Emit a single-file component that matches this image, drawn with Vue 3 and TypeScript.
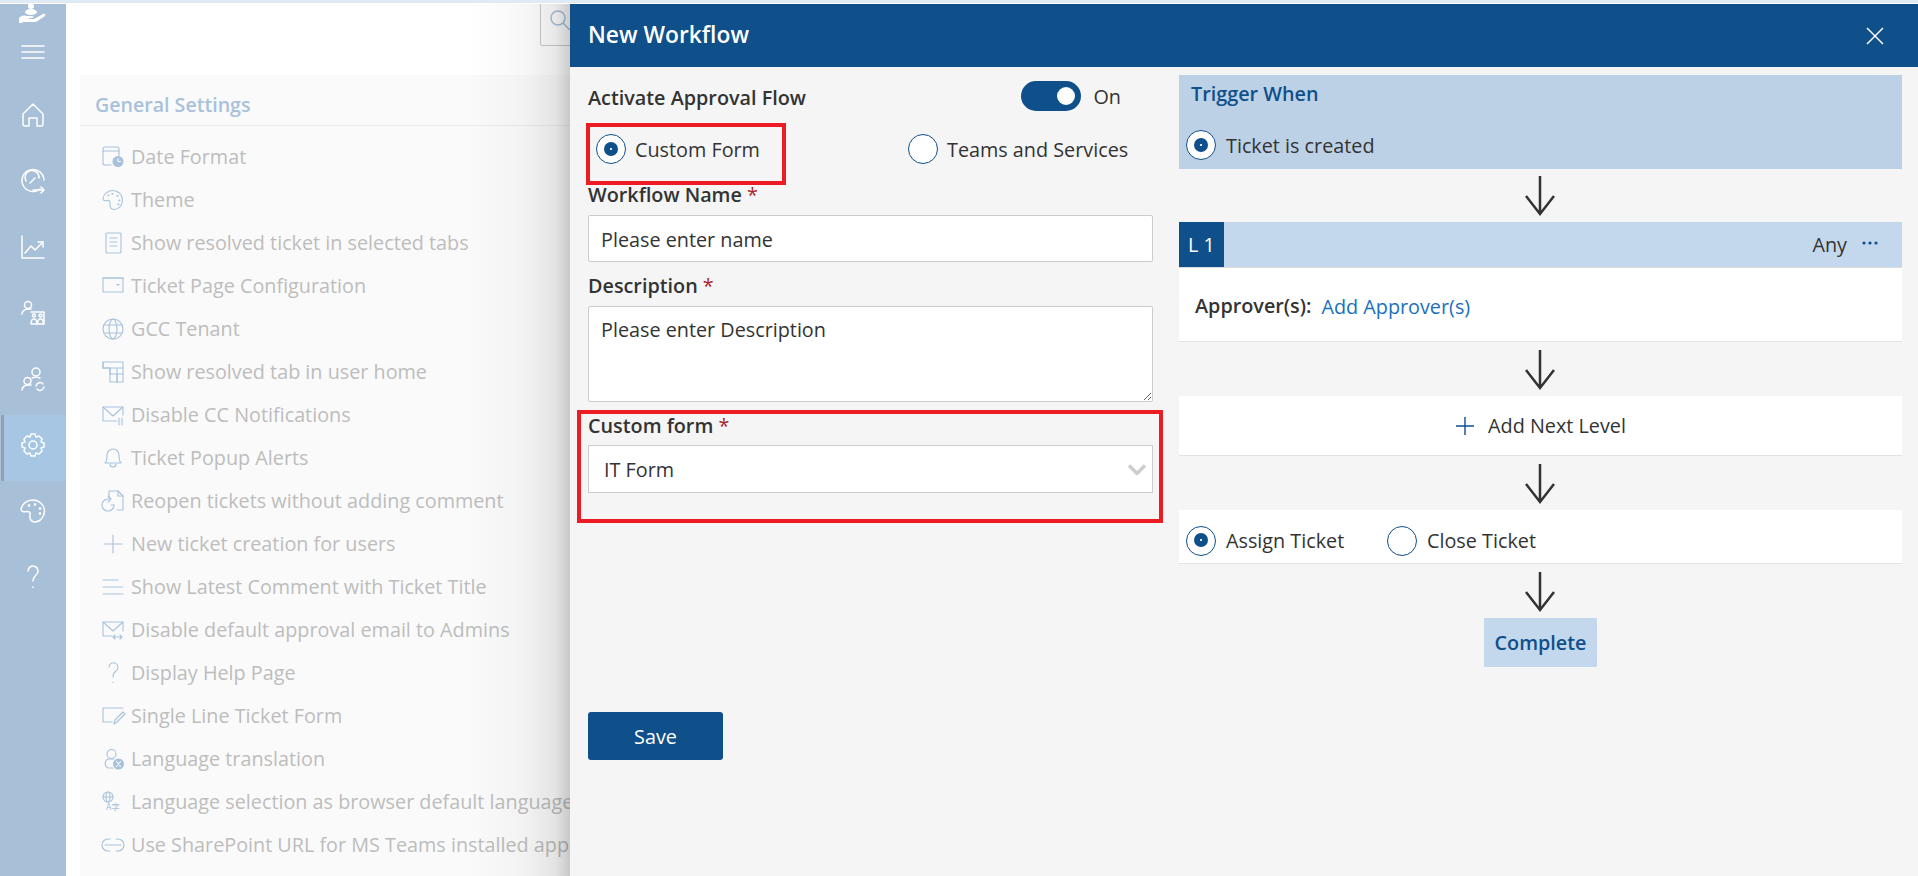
<template>
  <div class="page">
    <div class="top-strip"></div>
    <div class="shell">
      <aside class="sidebar">
        <svg class="logo" width="30" height="19" viewBox="0 0 30 19" fill="#fff">
          <circle cx="13" cy="2" r="3" />
          <ellipse cx="13" cy="8" rx="6" ry="3" />
          <path d="M1 14c2-3 6-3 8-2h5c2 0 2 2 0 2h-3v1h5l9-5c2-1 3 1 2 2l-9 6H5l-1 1H1z" />
        </svg>
        <div v-for="item in navIcons" :key="item.name" class="nav-item" :class="{ active: item.name === 'gear' }">
          <svg width="26" height="26" viewBox="0 0 26 26" fill="none" stroke="#fff" stroke-width="1.5" stroke-linecap="round" stroke-linejoin="round">
            <path v-for="d in item.paths" :key="d" :d="d" />
          </svg>
        </div>
      </aside>

      <main class="main">
        <div class="topbar">
          <div class="search">
            <svg width="22" height="22" viewBox="0 0 22 22" fill="none" stroke="#a8c2dc" stroke-width="1.5">
              <circle cx="9" cy="9" r="7" />
              <path d="M14 14l7 7" />
            </svg>
          </div>
        </div>
        <section class="settings">
          <h2 class="settings-title">General Settings</h2>
          <ul class="settings-list">
            <li v-for="row in settings" :key="row.label" class="settings-row">
              <svg class="row-icon" width="22" height="22" viewBox="0 0 22 22" fill="none" stroke="#a8c2dc" stroke-width="1.1" stroke-linejoin="round" stroke-linecap="round">
                <path v-for="d in row.paths" :key="d" :d="d" />
                <path v-if="row.fill" :d="row.fill" fill="#a8c2dc" stroke="none" />
                <path v-if="row.knock" :d="row.knock" stroke="#fafafa" />
                <text v-if="row.glyph" x="4" y="19" class="row-glyph">{{ row.glyph }}</text>
              </svg>
              <span class="row-label">{{ row.label }}</span>
            </li>
          </ul>
        </section>
      </main>
    </div>

    <div class="panel">
      <header class="panel-header">
        <h1>New Workflow</h1>
        <svg width="18" height="18" viewBox="0 0 18 18" stroke="#fff" stroke-width="1.5">
          <path d="M1 1l16 16M17 1L1 17" />
        </svg>
      </header>
      <div class="panel-body">
        <div class="form-col">
          <div class="activate-row">
            <span class="label">Activate Approval Flow</span>
            <div class="toggle-wrap">
              <span class="toggle"><i></i></span>
              <span>On</span>
            </div>
          </div>
          <div class="type-row">
            <div class="mark mark-radio">
              <span class="radio on"></span>
              <span>Custom Form</span>
            </div>
            <div class="type-other">
              <span class="radio"></span>
              <span>Teams and Services</span>
            </div>
          </div>
          <div class="label name-label">Workflow Name <em>*</em></div>
          <div class="field name-field">Please enter name</div>
          <div class="label desc-label">Description <em>*</em></div>
          <textarea class="field desc-field">Please enter Description</textarea>
          <div class="mark mark-form">
            <div class="label form-label">Custom form <em>*</em></div>
            <div class="select">
              <span>IT Form</span>
              <svg width="18" height="11" viewBox="0 0 18 11" fill="none" stroke="#cdcdcd" stroke-width="3.5">
                <path d="M1 1.500l8 8 8-8" />
              </svg>
            </div>
          </div>
          <button class="save" type="button">Save</button>
        </div>

        <div class="flow-col">
          <div class="trigger">
            <div class="trigger-title">Trigger When</div>
            <div class="choice">
              <span class="radio on"></span>
              <span>Ticket is created</span>
            </div>
          </div>
          <svg class="arrow first" width="32" height="53" viewBox="0 0 32 53" fill="none" stroke="#333" stroke-width="2.5">
            <path d="M15 7v38M1 27l14 18 14-18" />
          </svg>
          <div class="level-head">
            <span class="level-badge">L 1</span>
            <span class="level-any">Any</span>
            <svg class="level-dots" width="16" height="4" viewBox="0 0 16 4" fill="#0f4f8a">
              <circle cx="2" cy="2" r="1.6" /><circle cx="8" cy="2" r="1.6" /><circle cx="14" cy="2" r="1.6" />
            </svg>
          </div>
          <div class="card approver">
            <span class="label">Approver(s):</span>
            <a class="link">Add Approver(s)</a>
          </div>
          <svg class="arrow" width="32" height="54" viewBox="0 0 32 54" fill="none" stroke="#333" stroke-width="2.5">
            <path d="M15 8v38M1 28l14 18 14-18" />
          </svg>
          <div class="card next-level">
            <svg width="20" height="20" viewBox="0 0 20 20" stroke="#0f4f8a" stroke-width="1.4">
              <path d="M10 1v18M1 10h18" />
            </svg>
            <span>Add Next Level</span>
          </div>
          <svg class="arrow" width="32" height="54" viewBox="0 0 32 54" fill="none" stroke="#333" stroke-width="2.5">
            <path d="M15 8v38M1 28l14 18 14-18" />
          </svg>
          <div class="card outcome">
            <div class="choice">
              <span class="radio on"></span>
              <span>Assign Ticket</span>
            </div>
            <div class="choice">
              <span class="radio"></span>
              <span>Close Ticket</span>
            </div>
          </div>
          <svg class="arrow" width="32" height="54" viewBox="0 0 32 54" fill="none" stroke="#333" stroke-width="2.5">
            <path d="M15 8v38M1 28l14 18 14-18" />
          </svg>
          <div class="complete">Complete</div>
        </div>
      </div>
    </div>
  </div>
</template>

<script setup lang="ts">
interface SettingRow {
  label: string;
  paths: string[];
  fill?: string;
  knock?: string;
  glyph?: string;
}

const navIcons = [
  { name: 'menu', paths: ['M2 7h22', 'M2 13h22', 'M2 19h22'] },
  { name: 'home', paths: ['M3 12L13 2l10 10v10a2 2 0 0 1-2 2h-4v-8H9v8H5a2 2 0 0 1-2-2z'] },
  { name: 'gauge', paths: ['M20 21A11 11 0 1 1 24 12', 'M6 13a7 7 0 1 1 13-3', 'M10 15l5-5', 'M13 22h11M21 19l3 3-3 3'] },
  { name: 'chart', paths: ['M2 2v22h22', 'M5 19l6-7 4 4 8-8', 'M18 8h5v5'] },
  { name: 'people', paths: ['M11.500 5a3.500 3.500 0 1 1-7 0 3.500 3.500 0 0 1 7 0z', 'M2 14c0-3 3-5 6-5h3', 'M11 12h13v12', 'M15.500 15.500a1.500 1.500 0 1 1-3 0 1.500 1.500 0 0 1 3 0z', 'M22 15.500a1.500 1.500 0 1 1-3 0 1.500 1.500 0 0 1 3 0z', 'M11 24c0-3 1-5 3-5s3 2 3 5z', 'M17.500 24c0-3 1-5 3-5s3 2 3 5z'] },
  { name: 'sync', paths: ['M20 6a4 4 0 1 1-8 0 4 4 0 0 1 8 0z', 'M11 15a3.500 3.500 0 1 1-7 0 3.500 3.500 0 0 1 7 0z', 'M2 24c0-3 3-5 6-5h3', 'M12 12c2-1 6-1 8 0', 'M16 20a4 4 0 0 1 7-2', 'M24 21a4 4 0 0 1-7 2'] },
  { name: 'gear', paths: ['M11 2h4l1 3 3-1 3 3-1 3 3 1v4l-3 1 1 3-3 3-3-1-1 3h-4l-1-3-3 1-3-3 1-3-3-1v-4l3-1-1-3 3-3 3 1z', 'M17 13a4 4 0 1 0-8 0 4 4 0 0 0 8 0z'] },
  { name: 'palette', paths: ['M13 2C7 2 2 6 1 11c0 3 3 3 5 2.500 3-.5 4.500 1 4 3.500-.5 4 1 7 5 7 5 0 9.500-5 9.500-11S19 2 13 2z', 'M14.500 6h1v1h-1z', 'M19.500 10h1v1h-1z', 'M19.500 15h1v1h-1z', 'M8.500 7h1v1h-1z'] },
  { name: 'help', paths: ['M8 7a5 5 0 1 1 8 4c-2 2-3 3-3 6', 'M13 23v.5'] },
];

const settings: SettingRow[] = [
  { label: 'Date Format', paths: ['M9 19H3a2 2 0 0 1-2-2V3a2 2 0 0 1 2-2h12a2 2 0 0 1 2 2v7', 'M1 5h16'], fill: 'M21.500 15.500a5.500 5.500 0 1 1-11 0 5.500 5.500 0 0 1 11 0z', knock: 'M16 12.500v3h2.500' },
  { label: 'Theme', paths: ['M11 1.500C6 1.500 1.500 5 1 9.500c0 2 2 2.500 4 2 2-.5 3.500.5 3 3-.5 3.500 1 6 4 6 4.500 0 8.500-4 8.500-9.500S16 1.500 11 1.500z', 'M10 4.500h.8v.8h-.8z', 'M15 6.500h.8v.8h-.8z', 'M17 11h.8v.8h-.8z', 'M16 15h.8v.8h-.8z', 'M6 6h.8v.8h-.8z'] },
  { label: 'Show resolved ticket in selected tabs', paths: ['M5 1h13a1 1 0 0 1 1 1v18a1 1 0 0 1-1 1H5a1 1 0 0 1-1-1V2a1 1 0 0 1 1-1z', 'M8 6h7', 'M8 10h7', 'M8 14h7'] },
  { label: 'Ticket Page Configuration', paths: ['M1 3h20v14H1z', 'M1 3h20'], fill: 'M14 9h4l-2 2z' },
  { label: 'GCC Tenant', paths: ['M21 11a10 10 0 1 1-20 0 10 10 0 0 1 20 0z', 'M15 11c0 5.500-2 10-4 10s-4-4.500-4-10 2-10 4-10 4 4.500 4 10z', 'M2 7h18', 'M2 15h18'] },
  { label: 'Show resolved tab in user home', paths: ['M1 1h20v6H1z', 'M1 1v6h7v6h7v8h6V7', 'M8 13v8h7', 'M8 7v6', 'M15 7v6h6', 'M15 13v8'] },
  { label: 'Disable CC Notifications', paths: ['M15 17H1V3h20v8', 'M1 3l10 9 10-9', 'M17 14v7', 'M20 14v7'] },
  { label: 'Ticket Popup Alerts', paths: ['M3 16c2-2 2-4 2-8a6 6 0 0 1 12 0c0 4 0 6 2 8z', 'M8 17c0 4 6 4 6 0'] },
  { label: 'Reopen tickets without adding comment', paths: ['M7 9V1h9l5 5v13a1 1 0 0 1-1 1h-5', 'M16 1v5h5', 'M6 9a6 6 0 1 0 6 6', 'M6 6l3 3-3 3', 'M12 15h-3'] },
  { label: 'New ticket creation for users', paths: ['M11 2v18', 'M2 11h18'] },
  { label: 'Show Latest Comment with Ticket Title', paths: ['M1 4h15', 'M1 11h20', 'M1 18h20'] },
  { label: 'Disable default approval email to Admins', paths: ['M10 17H1V3h20v9', 'M1 3l10 9 10-9', 'M11 18h9M13 16l-2 2 2 2M18 16l2 2-2 2'] },
  { label: 'Display Help Page', paths: ['M7 5a4.500 4.500 0 1 1 7 4c-2 1.500-3 2.500-3 6', 'M11 20v.5'] },
  { label: 'Single Line Ticket Form', paths: ['M10 17H1V3h20', 'M12 19l1-4 8-8 2 2-8 8z'] },
  { label: 'Language translation', paths: ['M14 6a4.500 4.500 0 1 1-9 0 4.500 4.500 0 0 1 9 0z', 'M11 20H6a5 5 0 0 1 0-9h6'], fill: 'M22 16a5.500 5.500 0 1 1-11 0 5.500 5.500 0 0 1 11 0z', knock: 'M14.500 13.500l4 5M18.500 13.500l-4 5' },
  { label: 'Language selection as browser default language', paths: ['M11 6a5 5 0 1 1-10 0 5 5 0 0 1 10 0z', 'M8 6c0 3-1 5-2 5S4 9 4 6s1-5 2-5 2 2 2 5z', 'M1 6h10'], glyph: 'A字' },
  { label: 'Use SharePoint URL for MS Teams installed apps', paths: ['M8 5H6a6 6 0 0 0 0 12h2', 'M14 5h2a6 6 0 0 1 0 12h-2', 'M3 11h16'] },
];
</script>

<style>
html,
body {
  margin: 0;
  height: 100%;
  overflow: hidden;
  background: #fff;
}
</style>

<style scoped>
.page {
  position: relative;
  width: 1918px;
  height: 876px;
  overflow: hidden;
  font-family: "Open Sans", "Noto Sans", sans-serif;
  font-size: 19.8px;
  color: #333;
}

.top-strip {
  height: 3px;
  background: #dfeaf4;
}

.shell {
  display: flex;
  height: 873px;
  padding-top: 1px;
  box-sizing: border-box;
}

.sidebar {
  width: 66px;
  flex: none;
  background: #a8bfd8;
  display: flex;
  flex-direction: column;
  align-items: center;
  overflow: hidden;
}

.logo {
  margin-bottom: -4px;
  flex: none;
}

.nav-item {
  position: relative;
  width: 100%;
  height: 66px;
  flex: none;
  display: flex;
  align-items: center;
  justify-content: center;
}

.nav-item svg {
  margin-bottom: 6px;
}

.nav-item:first-of-type svg {
  margin-bottom: 0;
}

.nav-item.active {
  background: #a6c6e3;
}

.nav-item.active::before {
  content: "";
  position: absolute;
  left: 1px;
  top: 0;
  bottom: 0;
  width: 3px;
  background: #9a9fa6;
}

.main {
  flex: 1;
  display: flex;
  flex-direction: column;
  min-width: 0;
}

.topbar {
  height: 71px;
  flex: none;
}

.search {
  margin-left: 474px;
  width: 200px;
  height: 42px;
  box-sizing: border-box;
  border: 1px solid #ccc;
  border-top: none;
  border-radius: 0 0 0 3px;
  padding: 5px 0 0 8px;
}

.settings {
  flex: 1;
  margin-left: 14px;
  background: #fafafa;
}

.settings-title {
  margin: 0;
  height: 50px;
  line-height: 60px;
  padding-left: 15px;
  font-size: 19.6px;
  font-weight: 600;
  color: #a8c1dc;
  border-bottom: 1px solid #ececec;
}

.settings-list {
  list-style: none;
  margin: 0;
  padding: 9px 0 0 22px;
}

.settings-row {
  height: 43px;
  display: flex;
  align-items: center;
  gap: 7px;
  color: #bdbdbd;
  white-space: nowrap;
}

.row-icon {
  flex: none;
  overflow: visible;
}

.row-glyph {
  font-family: "Noto Sans CJK SC", sans-serif;
  font-size: 8.5px;
  fill: #a8c2dc;
  stroke: none;
}

.panel {
  position: absolute;
  left: 570px;
  top: 4px;
  right: 0;
  bottom: 0;
  background: #f5f5f5;
}

.panel::before {
  content: "";
  position: absolute;
  top: 0;
  bottom: 0;
  left: -100px;
  width: 100px;
  background: linear-gradient(to right, rgba(0, 0, 0, 0), rgba(0, 0, 0, 0.03) 55%, rgba(0, 0, 0, 0.09) 85%, rgba(0, 0, 0, 0.2));
}

.panel-header {
  height: 63px;
  background: #0f4f8a;
  color: #fff;
  display: flex;
  align-items: center;
  justify-content: space-between;
  padding: 0 34px 0 18px;
}

.panel-header h1 {
  margin: 0;
  font-size: 22.8px;
  font-weight: 600;
  position: relative;
  top: -1px;
}

.panel-body {
  display: flex;
}

.form-col {
  width: 565px;
  margin-left: 18px;
  padding-top: 14px;
}

.label {
  font-weight: 600;
  line-height: 24px;
}

.label em {
  font-style: normal;
  font-weight: 400;
  color: #a4262c;
}

.activate-row {
  height: 30px;
  display: flex;
  align-items: center;
  justify-content: space-between;
}

.activate-row .label {
  padding-top: 4px;
}

.toggle-wrap {
  display: flex;
  align-items: center;
  gap: 12px;
  margin-right: 32px;
}

.toggle {
  width: 60px;
  height: 30px;
  border-radius: 15px;
  background: #0f4f8a;
  display: flex;
  align-items: center;
  justify-content: flex-end;
  padding-right: 6px;
  box-sizing: border-box;
}

.toggle i {
  width: 18px;
  height: 18px;
  border-radius: 50%;
  background: #fff;
}

.type-row {
  margin-top: 12px;
  display: flex;
  height: 62px;
}

.mark {
  border: 4px solid #ed1c24;
  box-sizing: border-box;
}

.mark-radio {
  width: 200px;
  height: 62px;
  margin-left: -2px;
  padding: 7px 0 0 6px;
  display: flex;
  align-items: flex-start;
  gap: 9px;
  line-height: 31px;
}

.type-other {
  margin-left: 122px;
  padding-top: 11px;
  display: flex;
  align-items: flex-start;
  gap: 9px;
  line-height: 31px;
}

.radio {
  position: relative;
  width: 30px;
  height: 30px;
  box-sizing: border-box;
  flex: none;
  border: 1.5px solid #0f4f8a;
  border-radius: 50%;
  background: #fff;
  display: inline-block;
}

.radio.on::after {
  content: "";
  position: absolute;
  left: 6.500px;
  top: 6.500px;
  width: 14px;
  height: 14px;
  border-radius: 50%;
  background: radial-gradient(circle, #dfe8f2 0 0.8px, #0f4f8a 1.4px);
}

.name-label {
  margin-top: -2px;
  margin-bottom: 8px;
}

.field {
  display: block;
  box-sizing: border-box;
  width: 565px;
  background: #fff;
  border: 1px solid #ccc;
  border-radius: 2px;
  font: inherit;
  color: #333;
  padding: 0 12px;
}

.name-field {
  height: 47px;
  line-height: 47px;
}

.desc-label {
  margin-top: 12px;
  margin-bottom: 8px;
}

.desc-field {
  height: 96px;
  padding-top: 9px;
  outline: none;
}

.mark-form {
  margin: 8px -10px 0 -11px;
  height: 113px;
  padding: 0 6px 0 7px;
}

.form-label {
  margin-bottom: 7px;
}

.select {
  height: 48px;
  box-sizing: border-box;
  background: #fff;
  border: 1px solid #ccc;
  display: flex;
  align-items: center;
  justify-content: space-between;
  padding: 0 6px 0 15px;
}

.save {
  display: block;
  margin-top: 189px;
  width: 135px;
  height: 48px;
  border: none;
  border-radius: 3px;
  background: #0f4f8a;
  color: #fff;
  font: inherit;
}

.flow-col {
  width: 723px;
  margin-left: 26px;
  padding-top: 8px;
  display: flex;
  flex-direction: column;
}

.trigger {
  height: 94px;
  background: #bcd1e6;
  display: flex;
  flex-direction: column;
}

.trigger-title {
  padding: 7px 0 0 12px;
  line-height: 24px;
  font-weight: 600;
  color: #0f4f8a;
}

.trigger .choice {
  margin: 24px 0 0 7px;
}

.choice {
  display: flex;
  align-items: center;
  gap: 10px;
}

.arrow {
  flex: none;
  align-self: center;
}

.level-head {
  height: 46px;
  background: #c3d8ec;
  display: flex;
  align-items: center;
  padding-right: 24px;
  border-bottom: 1px solid #dcdcdc;
  box-sizing: border-box;
}

.level-badge {
  width: 45px;
  height: 100%;
  background: #0f4f8a;
  color: #fff;
  display: flex;
  align-items: center;
  justify-content: center;
  margin-right: auto;
}

.level-any {
  margin-right: 15px;
}

.level-dots {
  margin-bottom: 4px;
}

.card {
  background: #fff;
  border-bottom: 1px solid #e2e2e2;
  box-sizing: border-box;
}

.approver {
  height: 74px;
  display: flex;
  align-items: center;
  gap: 10px;
  padding: 3px 0 0 16px;
}

.link {
  color: #1a6fbd;
}

.next-level {
  height: 60px;
  display: flex;
  align-items: center;
  justify-content: center;
  gap: 13px;
}

.outcome {
  height: 54px;
  display: flex;
  align-items: center;
  padding: 8px 0 0 7px;
}

.outcome .choice:first-child {
  width: 201px;
}

.complete {
  align-self: center;
  width: 113px;
  height: 49px;
  background: #c3d8ec;
  color: #0f4f8a;
  font-weight: 600;
  display: flex;
  align-items: center;
  justify-content: center;
}
</style>
